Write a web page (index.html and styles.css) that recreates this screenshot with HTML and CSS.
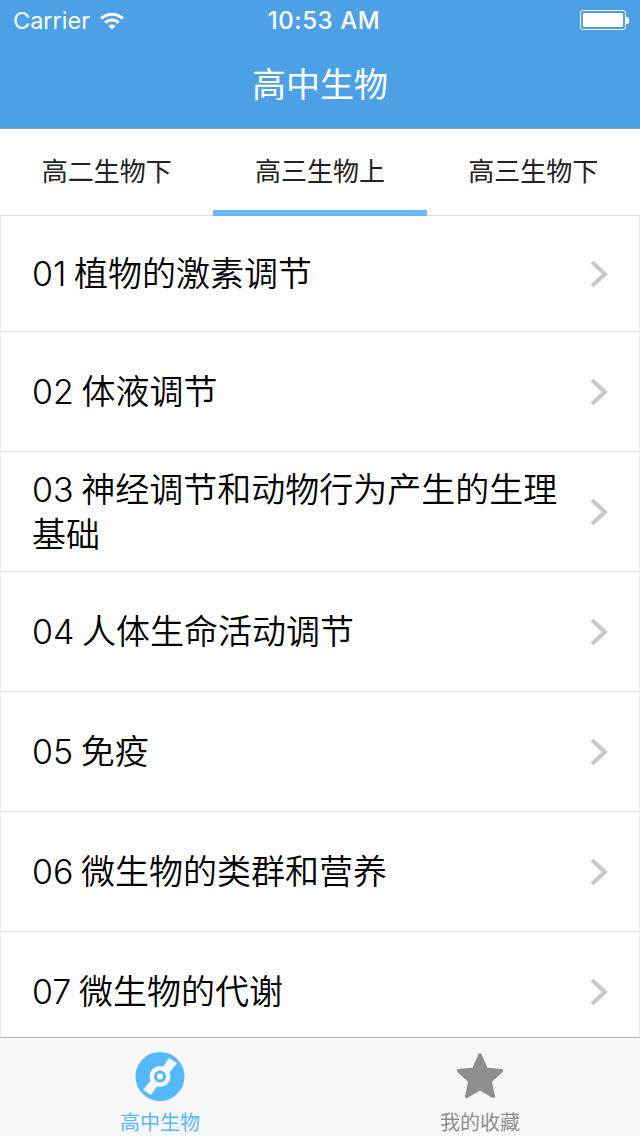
FILE: index.html
```html
<!DOCTYPE html>
<html lang="zh">
<head>
    <meta charset="UTF-8">
    <title>高中生物</title>
    <link rel="stylesheet" href="styles.css">
</head>
<body>

<div class="page">
    <div class="header">
        <div class="status-bar">
            <div class="status-left">
                <span>Carrier</span>
                <svg class="wifi" width="26" height="20" viewBox="0 0 26 20">
                    <path d="M1 7.5C8 1 18 1 25 7.5L23 9.7C17 4.3 9 4.3 3 9.7Z" fill="#fff"/>
                    <path d="M5.2 11.7C10 7.5 16 7.5 20.8 11.7L18.7 13.9C15 10.8 11 10.8 7.3 13.9Z" fill="#fff"/>
                    <path d="M9.3 15.8C11.6 14 14.4 14 16.7 15.8L13 19.5Z" fill="#fff"/>
                </svg>
            </div>
            <div class="status-time">10:53 AM</div>
            <div class="status-right">
                <div class="battery"><div class="battery-fill"></div></div>
                <div class="battery-tip"></div>
            </div>
        </div>
        <div class="title">高中生物</div>
    </div>

    <div class="tabs">
        <div class="tab">高二生物下</div>
        <div class="tab tab-active">高三生物上</div>
        <div class="tab">高三生物下</div>
    </div>

    <div class="list">
        <div class="row row-first">
            <div class="row-text">01 植物的激素调节</div>
            <svg class="chevron" width="20" height="28" viewBox="0 0 20 28"><path d="M3 2L16 14L3 26" fill="none" stroke="#c8c8cc" stroke-width="4"/></svg>
        </div>
        <div class="row">
            <div class="row-text">02 体液调节</div>
            <svg class="chevron" width="20" height="28" viewBox="0 0 20 28"><path d="M3 2L16 14L3 26" fill="none" stroke="#c8c8cc" stroke-width="4"/></svg>
        </div>
        <div class="row">
            <div class="row-text">03 神经调节和动物行为产生的生理基础</div>
            <svg class="chevron" width="20" height="28" viewBox="0 0 20 28"><path d="M3 2L16 14L3 26" fill="none" stroke="#c8c8cc" stroke-width="4"/></svg>
        </div>
        <div class="row">
            <div class="row-text">04 人体生命活动调节</div>
            <svg class="chevron" width="20" height="28" viewBox="0 0 20 28"><path d="M3 2L16 14L3 26" fill="none" stroke="#c8c8cc" stroke-width="4"/></svg>
        </div>
        <div class="row">
            <div class="row-text">05 免疫</div>
            <svg class="chevron" width="20" height="28" viewBox="0 0 20 28"><path d="M3 2L16 14L3 26" fill="none" stroke="#c8c8cc" stroke-width="4"/></svg>
        </div>
        <div class="row">
            <div class="row-text">06 微生物的类群和营养</div>
            <svg class="chevron" width="20" height="28" viewBox="0 0 20 28"><path d="M3 2L16 14L3 26" fill="none" stroke="#c8c8cc" stroke-width="4"/></svg>
        </div>
        <div class="row">
            <div class="row-text">07 微生物的代谢</div>
            <svg class="chevron" width="20" height="28" viewBox="0 0 20 28"><path d="M3 2L16 14L3 26" fill="none" stroke="#c8c8cc" stroke-width="4"/></svg>
        </div>
    </div>

    <div class="tabbar">
        <div class="tabbar-item tabbar-active">
            <svg width="50" height="50" viewBox="0 0 50 50">
                <circle cx="25" cy="24.5" r="24.5" fill="#54b8fc"/>
                <path d="M34 6L42 11L31 25L25 19Z" fill="#f7f7f7"/>
                <path d="M16 43L8 38L19 24L25 30Z" fill="#f7f7f7"/>
                <circle cx="25" cy="24.5" r="10.5" fill="#f7f7f7"/>
                <circle cx="25" cy="24.5" r="6" fill="#54b8fc"/>
                <circle cx="25" cy="24.5" r="3" fill="#f7f7f7"/>
            </svg>
            <div class="tabbar-label">高中生物</div>
        </div>
        <div class="tabbar-item">
            <svg width="50" height="50" viewBox="0 0 50 50">
                <path d="M25 3L31.2 17.2L46.5 18.8L35 29.2L38.3 44.3L25 36.5L11.7 44.3L15 29.2L3.5 18.8L18.8 17.2Z" fill="#8e8e8e" stroke="#8e8e8e" stroke-width="3.5" stroke-linejoin="round"/>
            </svg>
            <div class="tabbar-label">我的收藏</div>
        </div>
    </div>
</div>

</body>
</html>
```

FILE: styles.css
```css
* {
    box-sizing: border-box;
}

body {
    margin: 0;
    font-family: Inter, "Noto Sans CJK SC", sans-serif;
    background-color: #fff;
}

.page {
    display: flex;
    flex-direction: column;
    width: 640px;
    height: 1136px;
    overflow: hidden;
}

.header {
    height: 129px;
    flex-shrink: 0;
    background-color: #4ca1e6;
    border-bottom: 1px solid #999;
    color: #fff;
}

.status-bar {
    display: grid;
    grid-template-columns: 1fr auto 1fr;
    align-items: center;
    height: 40px;
    padding: 0 11px 0 13px;
}

.status-left {
    display: flex;
    align-items: center;
    gap: 9px;
    font-size: 23.5px;
}

.status-time {
    margin-left: 6px;
    font-size: 24px;
    font-weight: 500;
    letter-spacing: 0.6px;
}

.status-right {
    display: flex;
    align-items: center;
    justify-content: flex-end;
}

.battery {
    width: 46px;
    height: 20px;
    padding: 2px;
    border: 1px solid #fff;
    border-radius: 3px;
}

.battery-fill {
    height: 100%;
    background-color: #fff;
    border-radius: 1px;
}

.battery-tip {
    width: 3px;
    height: 7px;
    background-color: #fff;
    border-radius: 0 2px 2px 0;
}

.title {
    height: 88px;
    padding-top: 4px;
    font-size: 34px;
    line-height: 82px;
    text-align: center;
}

.tabs {
    display: flex;
    flex-shrink: 0;
    height: 87px;
    border-bottom: 1px solid #ddd;
}

.tab {
    flex: 1;
    height: 87px;
    font-size: 26px;
    line-height: 86px;
    text-align: center;
    color: #222;
}

.tab-active {
    border-bottom: 6px solid #6bb9f7;
}

.list {
    flex: 1;
    overflow: hidden;
    border-left: 1px solid #ececec;
    border-right: 1px solid #ececec;
}

.row {
    display: flex;
    align-items: center;
    justify-content: space-between;
    height: 120px;
    padding: 0 30px 0 31px;
    border-bottom: 1px solid #e4e4e4;
}

.row-first {
    height: 116px;
}

.row-text {
    width: 530px;
    font-size: 34px;
    font-weight: 350;
    line-height: 45px;
    word-spacing: -2px;
    color: #000;
}

.chevron {
    flex-shrink: 0;
}

.tabbar {
    display: flex;
    flex-shrink: 0;
    height: 99px;
    background-color: #f7f7f7;
    border-top: 1px solid #b2b2b2;
}

.tabbar-item {
    flex: 1;
    display: flex;
    flex-direction: column;
    align-items: center;
    padding-top: 14px;
    color: #8e8e8e;
}

.tabbar-active {
    color: #54b8fc;
}

.tabbar-label {
    margin-top: 9px;
    font-size: 20px;
    line-height: 24px;
}
```
